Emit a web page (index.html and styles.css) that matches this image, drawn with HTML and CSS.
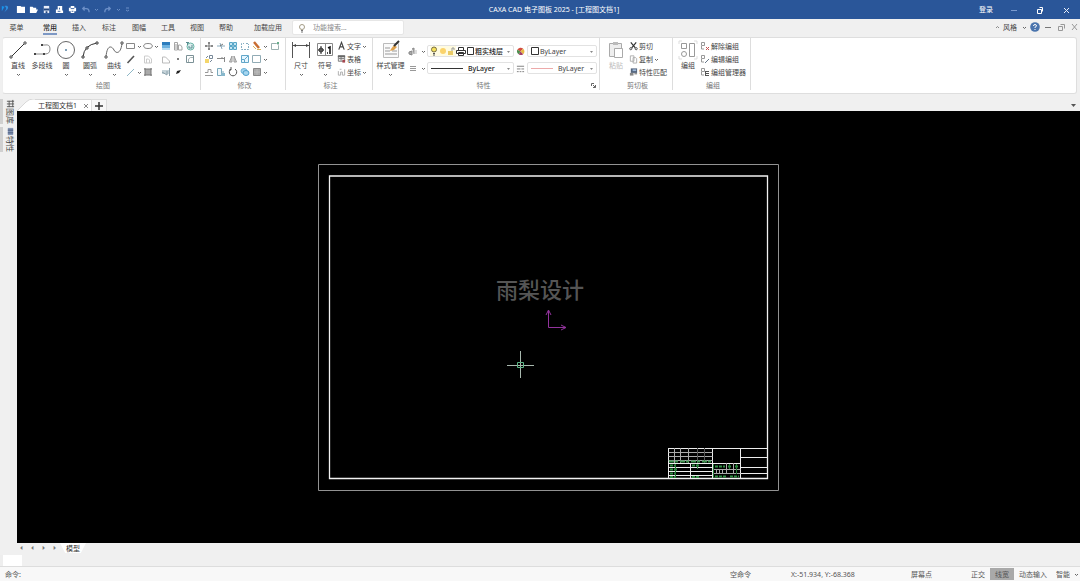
FILE: index.html
```html
<!DOCTYPE html>
<html lang="zh-CN">
<head>
<meta charset="utf-8">
<title>CAXA CAD 电子图板 2025</title>
<link rel="stylesheet" href="styles.css">
</head>
<body>
<svg class="sprite" aria-hidden="true">
  <symbol id="chev" viewBox="0 0 5 5"><path d="M1 2l1.500 1.500L4 2" fill="none" stroke="#666"/></symbol>
  <symbol id="tri" viewBox="0 0 5 5"><path d="M1 2h3L2.500 4z" fill="#888"/></symbol>
</svg>

<header class="titlebar">
  <div class="quick">
    <svg class="ic" viewBox="0 0 10 10"><path d="M2 1l3 1-3 5z" fill="#1594ee"/><path d="M5 1c4-1 5 2 3 4L4 9c3-4 4-6 1-8z" fill="#2e8fe0"/></svg>
    <button aria-label="新建"><svg class="ic" viewBox="0 0 10 10"><path d="M1 1h4l1 1h4v7H1z" fill="#fff"/></svg></button>
    <button aria-label="打开"><svg class="ic" viewBox="0 0 10 10"><path d="M1 2h3l1 1h3v2h2L8 9H1z" fill="#fff"/></svg></button>
    <button aria-label="保存"><svg class="ic" viewBox="0 0 10 10"><path d="M2 1h6v8H2z" fill="#e8eefa"/><path d="M2 4h6v2H2zM4 7h2v2H4z" fill="#24477e"/></svg></button>
    <button aria-label="另存为"><svg class="ic" viewBox="0 0 10 10"><path d="M3 1h5v5h1v3H1V5h2z" fill="#fff"/><path d="M3 7h3M5 3v2" stroke="#355c98"/></svg></button>
    <button aria-label="打印"><svg class="ic" viewBox="0 0 10 10"><path d="M3 1h4v2h2v4H7v2H3V7H1V3h2z" fill="#fff"/><path d="M3 4h4M4 7h2" stroke="#355c98"/></svg></button>
    <button aria-label="撤销"><svg class="ic" viewBox="0 0 10 10"><path d="M4 2L2 4l2 2M2 4h4q3 0 3 4" fill="none" stroke="#6c8fc7" stroke-width="1.500"/></svg></button>
    <button class="tiny" aria-label="撤销列表"><svg class="chev" viewBox="0 0 5 5"><path d="M1 2l1.500 1.500L4 2" fill="none" stroke="#6c8fc7"/></svg></button>
    <button aria-label="重做"><svg class="ic" viewBox="0 0 10 10"><path d="M6 2l2 2-2 2M8 4H5Q2 4 2 8" fill="none" stroke="#6c8fc7" stroke-width="1.500"/></svg></button>
    <button class="tiny" aria-label="重做列表"><svg class="chev" viewBox="0 0 5 5"><path d="M1 2l1.500 1.500L4 2" fill="none" stroke="#6c8fc7"/></svg></button>
    <button class="tiny" aria-label="自定义"><svg class="chev" viewBox="0 0 5 5"><path d="M1 1h3M1 3l1.500 1L4 3" fill="none" stroke="#6c8fc7"/></svg></button>
  </div>
  <h1>CAXA CAD 电子图板 2025 - [工程图文档1]</h1>
  <div class="winctl">
    <button class="login">登录</button>
    <button aria-label="最小化"><svg class="ic" viewBox="0 0 10 10"><path d="M2 5.500h6" stroke="#7b9bd0"/></svg></button>
    <button aria-label="还原"><svg class="ic" viewBox="0 0 10 10"><path d="M2.500 4.500h4v4h-4zM4.500 2.500h3v4" fill="none" stroke="#fff"/></svg></button>
    <button aria-label="关闭"><svg class="ic" viewBox="0 0 10 10"><path d="M3 3l5 5M8 3L3 8" stroke="#e8effb"/></svg></button>
  </div>
</header>

<nav class="menubar">
  <a href="#">菜单</a><a href="#" class="active">常用</a><a href="#">插入</a><a href="#">标注</a><a href="#">图幅</a><a href="#">工具</a><a href="#">视图</a><a href="#">帮助</a><a href="#" class="wide">加载应用</a>
  <label class="search"><svg class="ic" viewBox="0 0 10 10"><circle cx="5" cy="4" r="2.500" fill="#fff" stroke="#a39b85"/><path d="M4 7.500h2M4 9h2" stroke="#777"/></svg><input type="text" placeholder="功能搜索..." aria-label="功能搜索"></label>
  <div class="menuright">
    <button aria-label="折叠功能区"><svg class="chev" viewBox="0 0 5 5"><path d="M1 3l1.500-1.500L4 3" fill="none" stroke="#888"/></svg></button>
    <button>风格</button>
    <button aria-label="风格列表"><svg class="chev"><use href="#chev"/></svg></button>
    <button aria-label="帮助"><svg class="ic" viewBox="0 0 10 10"><circle cx="5" cy="5" r="4.800" fill="#4a74ad"/><path d="M3.500 4q0-1.500 1.500-1.500T6.500 4Q6 5 5 5.200V6M5 7v1" fill="none" stroke="#fff"/></svg></button>
    <button aria-label="最小化文档"><svg class="ic" viewBox="0 0 10 10"><path d="M2 5.500h6" stroke="#777"/></svg></button>
    <button aria-label="还原文档"><svg class="ic" viewBox="0 0 10 10"><path d="M2.500 4.500h4v4h-4zM4.500 2.500h4v4" fill="none" stroke="#999"/></svg></button>
    <button aria-label="关闭文档"><svg class="ic" viewBox="0 0 10 10"><path d="M3 2l5 6M8 2L3 8" stroke="#999"/></svg></button>
  </div>
</nav>

<section class="ribbon" aria-label="功能区">
  <div class="group draw">
    <div class="tools">
      <button class="big"><svg viewBox="0 0 20 20"><path d="M3 17L17 3" stroke="#333"/><path d="M2 16h2v2H2zM16 2h2v2h-2z" fill="#fff" stroke="#555"/></svg><span>直线</span><svg class="chev"><use href="#chev"/></svg></button>
      <button class="big"><svg viewBox="0 0 20 20"><path d="M3 14h10q5 0 5-5t-5-4h-2" fill="none" stroke="#888"/><path d="M2 13h2v2H2zM11 13h2v2h-2zM9 4h2v2H9z" fill="#444"/></svg><span>多段线</span></button>
      <button class="big"><svg viewBox="0 0 20 20"><circle cx="10" cy="10" r="8.500" fill="none" stroke="#666"/><path d="M9 10h2M10 9v2" stroke="#5580a0"/></svg><span>圆</span><svg class="chev"><use href="#chev"/></svg></button>
      <button class="big"><svg viewBox="0 0 20 20"><path d="M3 17Q4 5 17 3" fill="none" stroke="#333"/><path d="M2 16h2v2H2zM6 7h2v2H6zM16 2h2v2h-2z" fill="#fff" stroke="#444"/></svg><span>圆弧</span><svg class="chev"><use href="#chev"/></svg></button>
      <button class="big"><svg viewBox="0 0 20 20"><path d="M2 17C3 4 8 6 10 10s7 4 8-7" fill="none" stroke="#666"/><path d="M1 16h2v2H1zM17 2h2v2h-2z" fill="#fff" stroke="#555"/></svg><span>曲线</span><svg class="chev"><use href="#chev"/></svg></button>
      <div class="grid">
        <button aria-label="矩形"><svg class="ic" viewBox="0 0 10 10"><path d="M.5 2.500h8v5h-8z" fill="none" stroke="#888"/></svg><svg class="chev"><use href="#chev"/></svg></button>
        <button aria-label="椭圆"><svg class="ic" viewBox="0 0 10 10"><ellipse cx="5" cy="5" rx="4.300" ry="2.500" fill="none" stroke="#888"/></svg><svg class="chev"><use href="#chev"/></svg></button>
        <button aria-label="渐变填充"><svg class="ic" viewBox="0 0 10 10"><path d="M1 1h8v3H1z" fill="#2d7dbd"/><path d="M1 4h8v3H1z" fill="#6eb2df"/><path d="M1 7h8v2H1z" fill="#b9dcf2"/></svg></button>
        <button aria-label="齿轮"><svg class="ic" viewBox="0 0 10 10"><path d="M1.500 9V1.500h3V9zM5.500 9V4h2L9 6v3zM3 3v5" fill="none" stroke="#a5a5a5"/></svg></button>
        <button aria-label="公式曲线"><svg class="ic" viewBox="0 0 10 10"><circle cx="5.500" cy="5.500" r="3.500" fill="#dceeee" stroke="#69b5a8"/><path d="M1 1.500h3M2.500 1v3M4 5v2h3V4" stroke="#5b8d90" fill="none"/></svg></button>
        <button aria-label="中心线"><svg class="ic" viewBox="0 0 10 10"><path d="M1.500 9L8 2" stroke="#555" stroke-width="1.600"/></svg></button>
        <button aria-label="等距线"><svg class="ic" viewBox="0 0 10 10"><path d="M1.500 9V2h4l3 3v4zM3.500 9V5h2l1 1v3" fill="none" stroke="#ccc"/></svg></button>
        <button aria-label="多边形"><svg class="ic" viewBox="0 0 10 10"><path d="M1.500 9V3h3l4 4v2z" fill="none" stroke="#bbb"/></svg></button>
        <button aria-label="点"><svg class="ic" viewBox="0 0 10 10"><circle cx="5" cy="5" r="1" fill="#555"/></svg></button>
        <button aria-label="局部放大"><svg class="ic" viewBox="0 0 10 10"><path d="M1.500 1.500h7v7h-7z" fill="none" stroke="#7b9196"/><path d="M3.500 8V5l2-1.500H8" fill="none" stroke="#a5b3b6"/></svg></button>
        <button aria-label="平行线"><svg class="ic" viewBox="0 0 10 10"><path d="M1 9l7-7" stroke="#8eb7c6"/></svg><svg class="chev"><use href="#chev"/></svg></button>
        <button aria-label="剖面线"><svg class="ic" viewBox="0 0 10 10"><path d="M2 2h6v6H2z" fill="#aaa"/><path d="M1 2h8M1 8h8M2 1v8M8 1v8" stroke="#777"/></svg></button>
        <button aria-label="对称图形"><svg class="ic" viewBox="0 0 10 10"><path d="M1 3h7v4H1z" fill="#c5d3d9"/><path d="M8.500 1v8M1 5l5 3V4" fill="none" stroke="#8aa0aa"/></svg></button>
        <button aria-label="箭头"><svg class="ic" viewBox="0 0 10 10"><path d="M3 7l1-3 4-1-2 3z" fill="#222"/></svg></button>
      </div>
    </div>
    <h2>绘图</h2>
  </div>

  <div class="group modify">
    <div class="tools">
      <div class="grid">
        <button aria-label="平移"><svg class="ic" viewBox="0 0 10 10"><path d="M5 1v8M1 5h8" stroke="#777"/><path d="M4 2h2M4 8h2M2 4v2M8 4v2" stroke="#555"/></svg></button>
        <button aria-label="裁剪"><svg class="ic" viewBox="0 0 10 10"><path d="M1 5h8M4 2l2 6" stroke="#8babbc"/><path d="M4 5l3-2" stroke="#777"/></svg></button>
        <button aria-label="阵列"><svg class="ic" viewBox="0 0 10 10"><path d="M1.500 1.500h3v3h-3zM5.500 1.500h3v3h-3zM1.500 5.500h3v3h-3zM5.500 5.500h3v3h-3z" fill="#c5e6f4" stroke="#58a6c7"/></svg></button>
        <button aria-label="拉伸"><svg class="ic" viewBox="0 0 10 10"><path d="M1.500 4V2.500H4M6 2.500h2.500V4M1.500 5v3.500h7V5" fill="none" stroke="#84adc2" stroke-dasharray="2 1"/></svg></button>
        <button aria-label="删除"><svg class="ic" viewBox="0 0 10 10"><path d="M2 1l5 6" stroke="#c96d32" stroke-width="2.500"/><path d="M5 8.500h4M1 5l3 3" fill="none" stroke="#d9b35a"/></svg><svg class="chev"><use href="#chev"/></svg></button>
        <button aria-label="圆角"><svg class="ic" viewBox="0 0 10 10"><path d="M1.500 2.500h5q2 0 2 2v4h-7z" fill="none" stroke="#9bb0b0"/><path d="M7 1h2v2H7z" fill="#67ae8a"/></svg></button>
        <button aria-label="复制"><svg class="ic" viewBox="0 0 10 10"><path d="M1 5h4v4H1z" fill="#f4d66b"/><path d="M5.500 1.500h3v3h-3zM2 4l2-2M6 8l2-2" fill="none" stroke="#789"/></svg></button>
        <button aria-label="延伸"><svg class="ic" viewBox="0 0 10 10"><path d="M1 4.500h7M6 3v2M8.500 3v5" stroke="#888"/></svg></button>
        <button aria-label="镜像"><svg class="ic" viewBox="0 0 10 10"><path d="M4 2L1.500 8H4zM6 2l2.500 6H6z" fill="#ddd" stroke="#999"/></svg></button>
        <button aria-label="缩放"><svg class="ic" viewBox="0 0 10 10"><path d="M1.500 1.500h7v7h-7zM1.500 5.500h3v3M5 5l3-3" fill="#e6f6ff" stroke="#63a7c9"/></svg></button>
        <button aria-label="分解"><svg class="ic" viewBox="0 0 10 10"><path d="M.5 1.500h8v7h-8z" fill="none" stroke="#91abb5"/></svg><svg class="chev"><use href="#chev"/></svg></button>
        <span></span>
        <button aria-label="偏移"><svg class="ic" viewBox="0 0 10 10"><path d="M1 8.500h8M1 5.500h3v-3h3v3h2" fill="none" stroke="#999"/></svg></button>
        <button aria-label="打断"><svg class="ic" viewBox="0 0 10 10"><path d="M1.500 1.500h4v7h-4zM7 4v5" fill="#eef7fb" stroke="#7aa8bb"/><path d="M5 6h4v3H5z" fill="#88b8cc"/></svg></button>
        <button aria-label="旋转"><svg class="ic" viewBox="0 0 10 10"><path d="M3 2a3.700 3.700 0 1 0 4 0M3 0v3h-2" fill="none" stroke="#555"/></svg></button>
        <button aria-label="对齐"><svg class="ic" viewBox="0 0 10 10"><ellipse cx="4" cy="4" rx="3" ry="2.500" fill="#a5d5ef" stroke="#6fb5da"/><ellipse cx="6" cy="6" rx="3" ry="2.500" fill="#a5d5ef" stroke="#4f9fca"/></svg></button>
        <button aria-label="填充编辑"><svg class="ic" viewBox="0 0 10 10"><path d="M1.500 1.500h7v7h-7z" fill="#aaa" stroke="#888"/><path d="M2 5h6M5 2v6" stroke="#bbb"/></svg><svg class="chev"><use href="#chev"/></svg></button>
      </div>
    </div>
    <h2>修改</h2>
  </div>

  <div class="group annotate">
    <div class="tools">
      <button class="big"><svg viewBox="0 0 20 20"><path d="M1.500 2v16M18.500 2v16M2 5.500h16" stroke="#555"/><path d="M2 5.500l3-1.500v3zM18 5.500l-3-1.500v3z" fill="#444"/></svg><span>尺寸</span><svg class="chev"><use href="#chev"/></svg></button>
      <button class="big"><svg viewBox="0 0 20 20"><path d="M2.500 3.500h15v12h-15zM10.500 3v13" fill="#fff" stroke="#888"/><circle cx="6" cy="10" r="2" fill="none" stroke="#222"/><path d="M3 10h6M6 6v8" stroke="#222"/><path d="M12 13h1M13 8l2-1v7" fill="none" stroke="#111" stroke-width="1.500"/></svg><span>符号</span><svg class="chev"><use href="#chev"/></svg></button>
      <div class="list">
        <button><svg class="ic" viewBox="0 0 10 10"><path d="M2 9l3-8 3 8M3 6h4" fill="none" stroke="#444" stroke-width="1.300"/></svg>文字<svg class="chev"><use href="#chev"/></svg></button>
        <button><svg class="ic" viewBox="0 0 10 10"><path d="M1.500 1.500h7v6h-7zM2 4.500h6M4.500 2v5" fill="#eee" stroke="#777"/><path d="M1 1h8v2H1z" fill="#666"/><path d="M6 6h3v3H6z" fill="#a5474f"/></svg>表格</button>
        <button><svg class="ic" viewBox="0 0 10 10"><path d="M1.500 4v4.500H4V5h2v3.500h2.500V2M3 2h2" fill="none" stroke="#aaa"/></svg>坐标<svg class="chev"><use href="#chev"/></svg></button>
      </div>
    </div>
    <h2>标注</h2>
  </div>

  <div class="group props">
    <div class="tools">
      <button class="big style"><svg viewBox="0 0 20 20"><path d="M2.500 3.500h15v14h-15z" fill="#fafafa" stroke="#bbb"/><path d="M4 8h5M11 11h5M4 11h5M4 14h12" stroke="#999"/><path d="M10 9l3-4 3 2-3 3-4 1z" fill="#e0a24c"/><path d="M13 6l5-5" stroke="#333" stroke-width="2"/></svg><span>样式管理</span><svg class="chev"><use href="#chev"/></svg></button>
      <div class="combos">
        <div class="row">
          <button class="mini" aria-label="图层"><svg class="ic" viewBox="0 0 10 10"><path d="M1 6l3-1v4l-3-1zM4 3l2-1v6" fill="#aaa" stroke="#888"/><path d="M8 4v4" stroke="#bbb"/></svg><svg class="chev"><use href="#chev"/></svg></button>
          <div class="combo layer">
            <svg class="flags" viewBox="0 0 44 10"><path d="M0 0h26v10H0z" fill="#fffbe0"/><circle cx="4" cy="3.500" r="2.500" fill="#f6e05b" stroke="#776e45"/><path d="M3 7.500h2M3 9h2" stroke="#555"/><circle cx="13" cy="5" r="3" fill="#fbd36b"/><path d="M18 5h5v4h-5z" fill="#eacb66"/><path d="M22 5V2h2v2" fill="none" stroke="#999"/><path d="M28.500 4V1.500h5V4M26.500 4.500h9v3h-9zM28.500 6.500h5v3h-5z" fill="#fff" stroke="#333"/><path d="M37.500 1.500h6v7h-6z" fill="#fff" stroke="#333"/></svg>
            <select class="strong" aria-label="当前图层"><option>粗实线层</option></select><svg class="chev"><use href="#tri"/></svg>
          </div>
          <svg class="ic mid" viewBox="0 0 10 10"><path d="M5 5L1.500 3A4 4 0 0 1 8 2z" fill="#d34d3f"/><path d="M5 5l3-3a4 4 0 0 1 0 6z" fill="#e8b944"/><path d="M5 5l3 3a4 4 0 0 1-5 0z" fill="#a33e68"/><path d="M5 5L3 8a4 4 0 0 1-1.500-5z" fill="#4b8c4b"/></svg>
          <div class="combo color"><svg class="ic" viewBox="0 0 10 10"><path d="M1.500 1.500h7v7h-7z" fill="#fff" stroke="#333"/></svg><select aria-label="颜色"><option>ByLayer</option></select><svg class="chev"><use href="#tri"/></svg></div>
        </div>
        <div class="row">
          <button class="mini" aria-label="线型"><svg class="ic" viewBox="0 0 10 10"><path d="M2 3.500h6M2 5.500h6M2 7.500h6" stroke="#999"/></svg><svg class="chev"><use href="#chev"/></svg></button>
          <div class="combo layer"><svg class="dash" viewBox="0 0 34 10"><path d="M1 5.500h32" stroke="#333"/></svg><select class="strong" aria-label="线型选择"><option>ByLayer</option></select><svg class="chev"><use href="#tri"/></svg></div>
          <svg class="ic mid" viewBox="0 0 10 10"><path d="M1 2.500h8M1 5.500h4M6 5.500h3M1 8.500h2M4 8.500h2M7 8.500h2" stroke="#777"/></svg>
          <div class="combo color"><svg class="dash red" viewBox="0 0 24 10"><path d="M1 5.500h22" stroke="#edaaaa"/></svg><select aria-label="线宽"><option>ByLayer</option></select><svg class="chev"><use href="#tri"/></svg></div>
        </div>
      </div>
    </div>
    <div class="foot"><h2>特性</h2><button aria-label="特性对话框"><svg class="chev" viewBox="0 0 5 5"><path d="M.5 3V.5H3M2 2l2.500 2.500M4.500 2v2.500H2" fill="none" stroke="#666"/></svg></button></div>
  </div>

  <div class="group clip">
    <div class="tools">
      <button class="big" disabled><svg viewBox="0 0 20 20"><path d="M3.500 3.500h12v13h-12z" fill="#eee" stroke="#aaa"/><path d="M7 2h5v3H7z" fill="#bbb"/><path d="M8.500 8.500h8v9h-8z" fill="#fff" stroke="#aaa"/></svg><span>粘贴</span></button>
      <div class="list">
        <button><svg class="ic" viewBox="0 0 10 10"><path d="M2 1l5 6M8 1L3 7" stroke="#333" stroke-width="1.300"/><circle cx="2" cy="8" r="1.200" fill="none" stroke="#444"/><circle cx="8" cy="8" r="1.200" fill="none" stroke="#444"/></svg>剪切</button>
        <button><svg class="ic" viewBox="0 0 10 10"><path d="M1.500 1.500h4v6h-4zM4.500 3.500h3l1 1v5h-4z" fill="#fff" stroke="#aaa"/></svg>复制<svg class="chev"><use href="#chev"/></svg></button>
        <button><svg class="ic" viewBox="0 0 10 10"><path d="M2 1h7v5H2z" fill="#53647c"/><path d="M4 2h4v2H4z" fill="#9eb8d9"/><path d="M1 6h4v3H1z" fill="#888"/><path d="M6 7h3" stroke="#555"/></svg>特性匹配</button>
      </div>
    </div>
    <h2>剪切板</h2>
  </div>

  <div class="group block">
    <div class="tools">
      <button class="big"><svg viewBox="0 0 20 20"><path d="M3.500 3.500h5v5h-5zM11.500 3.500h5v13h-5z" fill="#fff" stroke="#999"/><circle cx="6" cy="14" r="2.500" fill="#fff" stroke="#999"/><path d="M1 4V1h3M16 1h3v3M1 16v3h3M19 16v3h-3" fill="none" stroke="#ddd"/></svg><span>编组</span></button>
      <div class="list">
        <button><svg class="ic" viewBox="0 0 10 10"><path d="M1.500 1.500h3v3h-3zM1.500 5v3H4" fill="none" stroke="#999"/><path d="M6 6l3 3M9 6L6 9" stroke="#c64f4f"/></svg>解除编组</button>
        <button><svg class="ic" viewBox="0 0 10 10"><path d="M1.500 1.500h3v3h-3zM1.500 5v3H4" fill="none" stroke="#999"/><path d="M5 9l4-4" stroke="#678"/></svg>编辑编组</button>
        <button><svg class="ic" viewBox="0 0 10 10"><path d="M1.500 1.500h3v3h-3zM1.500 5v3H4" fill="none" stroke="#999"/><path d="M5 4.500h4M5 6.500h4M5 8.500h4M5.500 4v5" stroke="#555"/></svg>编组管理器</button>
      </div>
    </div>
    <h2>编组</h2>
  </div>
</section>

<main class="work">
  <aside class="side">
    <button><svg class="ic" viewBox="0 0 10 10"><path d="M1 2.500h8M1 5.500h8M1 8.500h8M3.500 2v7M7.500 1v8" stroke="#555"/></svg><span>图库</span></button>
    <button><svg class="ic" viewBox="0 0 10 10"><path d="M2 1h6v8H2z" fill="#8596b5"/><path d="M2 3.500h6M2 6.500h6" stroke="#455678"/></svg><span>特性</span></button>
  </aside>
  <div class="doc">
    <div class="doctabs">
      <div class="doctab"><svg class="slope" viewBox="0 0 18 12"><path d="M0 12L9 3q3-3 7-3h2v12z" fill="#fff"/><path d="M0 12L9 3q3-3 7-3h2" fill="none" stroke="#d8d8d8"/></svg><div class="tabbody"><span>工程图文档1</span><button aria-label="关闭标签"><svg class="ic" viewBox="0 0 10 10"><path d="M3 3l4 4M7 3L3 7" stroke="#888"/></svg></button></div></div>
      <button class="add" aria-label="新建文档"><svg class="ic" viewBox="0 0 10 10"><path d="M5 1v8M1 5h8" stroke="#333" stroke-width="1.500"/></svg></button>
      <button class="more" aria-label="文档列表"><svg class="chev" viewBox="0 0 5 5"><path d="M0 1h5L2.500 4z" fill="#555"/></svg></button>
    </div>
    <svg class="canvas" viewBox="17 111 1063 432" role="img" aria-label="绘图区">
      <g fill="none">
        <path d="M318.500 164.500h460v326h-460z" stroke="#929292"/>
        <path d="M329.500 176h438v302.500h-438z" stroke="#f2f2f2" stroke-width="1.300"/>
        <path d="M668.500 448.500h99M668.500 448v30M712.500 448v30M740.500 448v30M740.500 457.500h27M740.500 467.500h27M740.500 473.500h27M712.500 463.500h28M668.500 463.500h44M668.500 467.500h44M668.500 471.500h44M668.500 475.500h44M690.500 463v15" stroke="#ededed"/>
        <path d="M668.500 452.500h44M668.500 456.500h44M668.500 460.500h44M674.500 448v15M680.500 448v15M688.500 448v15M712.500 469.500h28M712.500 473.500h28M726.500 463v10M733.500 463v10M716.500 469v5M719.500 469v5M722.500 469v5" stroke="#aaa"/>
        <path d="M697.500 448v15M704.500 448v15" stroke="#555"/>
        <path d="M669 461.500h43" stroke="#3f9450" stroke-width="2" stroke-dasharray="5 1 3 2"/>
        <path d="M670 465.500h6M670 469.500h7M670 473.500h5M670 477h6M692 465.500h7M692 477h7M715 466.500h10M728 466.500h4M735 466.500h4M715 476.500h11M730 476.500h9" stroke="#2f8d42" stroke-width="2" stroke-dasharray="3 1"/>
        <path d="M675.500 464v14M697.500 464v5M729.500 464v5M736.500 464v10M713.500 464v14" stroke="#237c35"/>
        <path d="M548.500 311v16.500h17M546 315l2.500-5 2.500 5M561 325l5 2.500-5 2.500" stroke="#92339c"/>
        <path d="M520.500 351v27M507 365.500h27" stroke="#a8b8ae"/>
        <path d="M517.500 362.500h6v5h-6z" stroke="#5fb788"/>
      </g>
      <text class="mark" x="496" y="298">雨梨设计</text>
    </svg>
    <div class="sheets">
      <button aria-label="首页">⏴</button><button aria-label="上一页">⏴</button><button aria-label="下一页">⏵</button><button aria-label="末页">⏵</button>
      <button class="sheet">模型</button>
    </div>
  </div>
</main>

<div class="command"><input type="text" aria-label="命令输入"></div>
<footer class="status">
  <span class="prompt">命令:</span>
  <span class="idle">空命令</span>
  <span class="coord">X:-51.934, Y:-68.368</span>
  <span class="snap">屏幕点</span>
  <button>正交</button><button class="on">线宽</button><button>动态输入</button>
  <select aria-label="捕捉方式"><option>智能</option></select><svg class="chev"><use href="#chev"/></svg>
</footer>
</body>
</html>
```
FILE: styles.css
```css
* { box-sizing: border-box; }

body {
  margin: 0;
  min-height: 100vh;
  display: flex;
  flex-direction: column;
  background: #f0f0f0;
  color: #444;
  font: 7px/9px "Noto Sans", "Noto Sans CJK SC", sans-serif;
}

button, input, select {
  margin: 0;
  padding: 0;
  border: 0;
  background: none;
  color: inherit;
  font: inherit;
  appearance: none;
  white-space: nowrap;
}

button { display: flex; align-items: center; justify-content: center; }
svg { display: block; flex: none; }
h1, h2 { margin: 0; font: inherit; }
a { color: inherit; text-decoration: none; }

.sprite { width: 0; height: 0; position: absolute; }
.ic { width: 10px; height: 10px; }
.chev { width: 5px; height: 5px; }

/* Title bar */
.titlebar {
  display: grid;
  grid-template-columns: 1fr auto 1fr;
  align-items: center;
  height: 19px;
  background: #2a5699;
  color: #fff;
}
.quick { display: flex; align-items: center; height: 15px; gap: 4px; }
.quick .ic { width: 9px; height: 9px; }
.quick > svg { margin-right: 3px; }
.quick .tiny, .quick .tiny svg { width: 5px; }
.titlebar h1 { padding-left: 28px; }
.winctl { display: flex; justify-content: flex-end; gap: 16px; padding-right: 9px; }

/* Menu bar */
.menubar { display: flex; height: 18px; padding-left: 2px; }
.menubar a { display: flex; width: 29px; justify-content: center; padding-top: 4px; }
.menubar a.active { width: 38px; position: relative; color: #222; font-weight: 500; }
.menubar a.active::after {
  content: "";
  position: absolute;
  bottom: 2px;
  width: 14px;
  height: 2px;
  background: #7d98c4;
}
.menubar a.wide { width: 46px; }
.menubar a:nth-child(3) { width: 20px; }
.menubar a:nth-child(4) { width: 40px; }
.menubar a:nth-child(5) { width: 20px; }
.menubar a:nth-child(6) { width: 38px; }
.menubar a:nth-child(7) { width: 20px; }
.menubar a:nth-child(8) { width: 38px; }
.search {
  display: flex;
  align-items: center;
  gap: 6px;
  width: 112px;
  height: 15px;
  margin: 1px 0 0 1px;
  padding-left: 4px;
  border: 1px solid #e6e6e6;
  border-radius: 2px;
  background: #fff;
}
.search input { width: 80px; }
.search input::placeholder { color: #888; opacity: 1; }
.menuright { display: flex; align-items: center; gap: 3px; height: 16px; margin-left: auto; padding-right: 1px; }
.menuright button:nth-child(2) { margin-right: 2px; }

/* Ribbon */
.ribbon {
  display: flex;
  margin: 0 3px 1px 2px;
  background: #fff;
  border: 1px solid #dedede;
  border-left-color: #eee;
  border-radius: 3px;
}
.group {
  display: flex;
  flex-direction: column;
  margin-bottom: 3px;
  padding-top: 2px;
  border-right: 1px solid #ddd;
}
.group h2 { text-align: center; color: #777; }
.tools { display: flex; height: 41px; }
.draw { width: 198px; padding-left: 3px; }
.modify { width: 85px; padding-left: 3px; }
.annotate { width: 87px; padding-left: 3px; }
.props { width: 227px; padding-left: 3px; }
.clip { width: 73px; padding-left: 3px; }
.block { width: 78px; padding-left: 3px; }

.big { flex: none; flex-direction: column; justify-content: flex-start; width: 24px; }
.big > svg:first-child { width: 20px; height: 20px; margin-bottom: 1px; }
.big .chev { margin-top: 2px; }
.big:disabled { color: #bbb; }
.big.style { width: 29px; }
.clip .big { width: 26px; }

.grid { display: grid; grid-auto-rows: 12px; row-gap: 1px; height: 38px; }
.grid button { justify-content: flex-start; gap: 1px; }
.draw .grid { grid-template-columns: 17px 18px 12px 12px 12px; }
.modify .grid { grid-template-columns: 12px 12px 12px 12px 18px 12px; }

.list { display: grid; grid-auto-rows: 12px; row-gap: 1px; height: 38px; }
.list button { justify-content: flex-start; gap: 1px; }
.list .ic { width: 9px; }
.block .list .ic { width: 10px; }

.combos { display: flex; flex-direction: column; gap: 5px; padding-top: 5px; margin-left: 3px; }
.row { display: flex; align-items: center; height: 12px; }
.mini { gap: 3px; margin-right: 1px; }
.combo {
  display: flex;
  align-items: center;
  height: 12px;
  padding: 0 2px;
  border: 1px solid #e2e2e2;
  border-radius: 2px;
}
.combo select { flex: 1; min-width: 0; }
.combo .strong { color: #222; font-weight: 500; }
.layer { width: 87px; }
.color { width: 70px; }
.mid { margin: 0 2px; width: 9px; height: 9px; }
.flags { width: 44px; height: 10px; margin-right: 1px; }
.dash { width: 34px; height: 10px; margin-right: 4px; }
.dash.red { width: 24px; margin-right: 4px; }
.foot { display: grid; grid-template-columns: 1fr auto; padding-right: 3px; }

/* Work area */
.work { flex: 1; display: flex; min-height: 0; }
.side { width: 17px; padding-top: 4px; display: flex; flex-direction: column; gap: 3px; }
.side button {
  flex-direction: column;
  width: 14px;
  padding-left: 3px;
  border-left: 3px solid #d0d0d0;
}
.side .ic { width: 9px; height: 9px; }
.side span { writing-mode: vertical-rl; text-orientation: sideways; font-size: 8px; }
.doc { flex: 1; display: flex; flex-direction: column; min-width: 0; }
.doctabs { display: flex; height: 16px; padding-top: 4px; }
.doctab { display: flex; }
.slope { width: 18px; height: 12px; }
.tabbody { display: flex; align-items: center; gap: 4px; padding-left: 3px; background: #fff; border-top: 1px solid #d8d8d8; color: #333; }
.add { width: 16px; background: #f7f7f7; border: 1px solid #ddd; border-bottom: 0; }
.more { margin-left: auto; padding-right: 4px; }
.canvas { flex: 1 1 0; width: 100%; min-height: 0; background: #000; }
.mark {
  font-family: "Noto Sans CJK SC", sans-serif;
  font-size: 22px;
  font-weight: 500;
  fill: #555;
}
.sheets { display: flex; height: 12px; gap: 2px; color: #777; }
.sheets button { width: 9px; height: 10px; font-size: 6px; }
.sheets .sheet {
  width: 26px;
  font-size: 7px;
  color: #333;
  background: #fff;
  clip-path: polygon(0 0, 100% 0, 80% 100%, 20% 100%);
  margin-left: -1px;
}

.command { height: 12px; border-bottom: 1px solid #ddd; }
.command input { display: block; width: 22px; height: 11px; background: #fff; border-left: 3px solid #eee; }

/* Status bar */
.status {
  display: flex;
  align-items: center;
  height: 14px;
  padding: 0 1px 0 5px;
  background: #f8f8f8;
  color: #555;
}
.prompt { margin-right: auto; }
.idle { width: 61px; }
.coord { width: 120px; }
.snap { width: 55px; }
.status button { height: 12px; padding: 0 5px; }
.status .on { background: #a9a9a9; }
.status select { width: 14px; margin: 0 4px; }
```
